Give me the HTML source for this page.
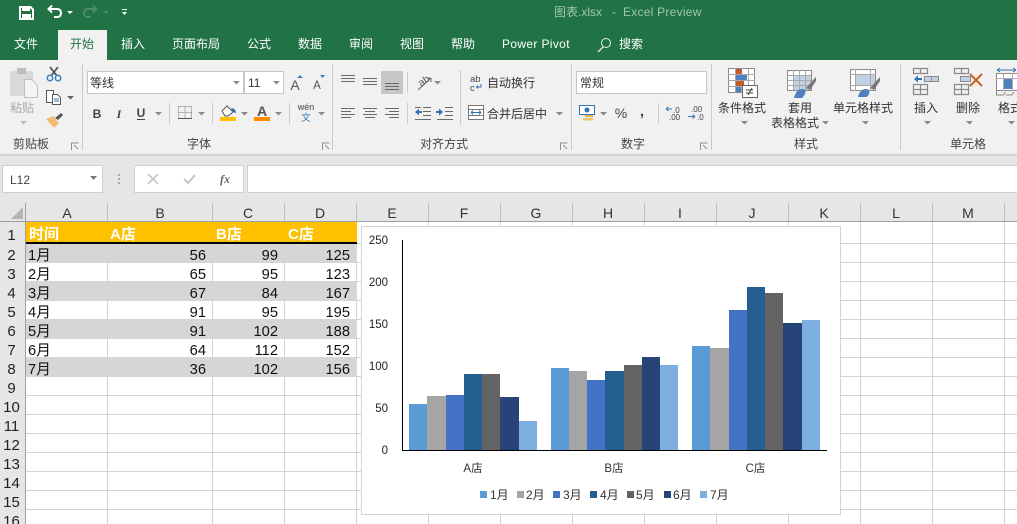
<!DOCTYPE html>
<html><head><meta charset="utf-8"><style>
html,body{margin:0;padding:0;background:#fff;width:1017px;height:524px;overflow:hidden}
svg{display:block}
text{font-family:"Liberation Sans","Noto Sans CJK SC",sans-serif;font-size:12px;fill:#333}
.t{fill:#fff}
.c{text-anchor:middle}
.r{text-anchor:end}
.g{fill:#444}
.d{fill:#8a8a8a;stroke:none}
.cell{font-size:14.7px;fill:#111}
.rh{font-size:15px;fill:#222;text-anchor:middle}
.ch{font-size:14px;fill:#333;text-anchor:middle}
.y{font-size:11.5px;fill:#222;text-anchor:end}
.lg{font-size:12px;fill:#333}
.h{font-size:15px;font-weight:bold;fill:#fff}
.ln{stroke:#6a6a6a;stroke-width:1;fill:none}
</style></head><body>
<svg width="1017" height="524" viewBox="0 0 1017 524" xmlns="http://www.w3.org/2000/svg">
<rect width="1017" height="524" fill="#fff"/>
<!-- title bar -->
<rect width="1017" height="60" fill="#217346"/>
<path d="M20 7h10.500l2.500 2.500V19H20z" fill="none" stroke="#fff" stroke-width="2"/>
<rect x="22" y="7" width="8" height="4" fill="#fff"/><rect x="22" y="14" width="9" height="5" fill="#fff"/>
<path d="M49 9h8c3 0 4 2 4 4s-1 4-4 4h-3M52 5.500l-3.500 3.500 3.500 3.500" fill="none" stroke="#fff" stroke-width="2"/>
<path d="M67 11h6l-3 3z" fill="#fff"/>
<path d="M96 9h-8c-3 0-4 2-4 4s1 4 4 4h3M93 5.500l3.500 3.500-3.500 3.500" fill="none" stroke="#4d8d69" stroke-width="2"/>
<path d="M103 11h6l-3 3z" fill="#4d8d69"/>
<rect x="122" y="9" width="5" height="1" fill="#fff"/><path d="M122 12h5l-2.500 3z" fill="#fff"/>
<text x="554" y="16" style="fill:#a3c5b1;font-size:12px">图表.xlsx</text>
<text x="612" y="16" style="fill:#a3c5b1;font-size:12px">-</text>
<text x="623" y="16" style="fill:#a3c5b1;font-size:12px;letter-spacing:.25px">Excel Preview</text>
<rect x="58" y="30" width="49" height="30" fill="#f1f1f1"/>
<text x="14" y="48" class="t">文件</text>
<text x="70" y="48" style="fill:#217346">开始</text>
<text x="121" y="48" class="t">插入</text>
<text x="172" y="48" class="t">页面布局</text>
<text x="247" y="48" class="t">公式</text>
<text x="298" y="48" class="t">数据</text>
<text x="349" y="48" class="t">审阅</text>
<text x="400" y="48" class="t">视图</text>
<text x="451" y="48" class="t">帮助</text>
<text x="502" y="48" class="t" style="letter-spacing:.35px">Power Pivot</text>
<circle cx="606" cy="43" r="4.500" fill="none" stroke="#e6efe9" stroke-width="1"/><path d="M603 47l-5 5" stroke="#e6efe9" stroke-width="1.300"/>
<text x="619" y="48" class="t">搜索</text>
<!-- ribbon -->
<rect y="60" width="1017" height="94" fill="#f1f1f1"/>
<rect y="154" width="1017" height="2" fill="#d2d2d2"/>
<rect y="156" width="1017" height="65" fill="#e6e6e6"/>
<g fill="#c9c9c9"><rect x="82" y="64" width="1" height="86"/><rect x="332" y="64" width="1" height="86"/><rect x="571" y="64" width="1" height="86"/><rect x="711" y="64" width="1" height="86"/><rect x="900" y="64" width="1" height="86"/></g>
<!-- clipboard -->
<rect x="10" y="71" width="23" height="25" fill="#d9d9d9"/><rect x="17" y="68" width="9" height="6" fill="#bdbdbd"/>
<path d="M24.500 79.500h7l6 6v12h-13z" fill="#f4f4f4" stroke="#c0c0c0"/>
<text x="10" y="112" style="fill:#a9a9a9">粘贴</text>
<path d="M20 121h7l-3.500 3.500z" fill="#b5b5b5"/>
<path d="M50 67l7 9M58 67l-7 9" stroke="#555" stroke-width="1.800" fill="none"/>
<circle cx="50" cy="78" r="2.700" fill="none" stroke="#3f7fbf" stroke-width="1.500"/><circle cx="58" cy="78" r="2.700" fill="none" stroke="#3f7fbf" stroke-width="1.500"/>
<path d="M46.500 90.500h7v12h-7z" fill="#fff" stroke="#555"/><path d="M52.500 94.500h5l3 3v7h-8z" fill="#fff" stroke="#555"/>
<path d="M54 99h5M54 101h5" stroke="#2f75b5"/>
<path d="M67 96h7l-3.500 3.500z" fill="#666"/>
<path d="M46 119l7-3 6 7-5 5z" fill="#f0bd77"/><path d="M55 118l6-5 2 2-5 5z" fill="#555"/>
<text x="13" y="148" class="g">剪贴板</text>
<!-- launchers -->
<g fill="none" stroke="#8f8f8f"><path d="M71.500 150v-7h7M322.500 150v-7h7M560.500 150v-7h7M700.500 150v-7h7"/><path d="M74 145l4 4M325 145l4 4M563 145l4 4M703 145l4 4"/></g>
<!-- font -->
<rect x="87.500" y="71.500" width="156" height="22" fill="#fff" stroke="#c6c6c6"/><rect x="244.500" y="71.500" width="39" height="22" fill="#fff" stroke="#c6c6c6"/>
<text x="90" y="87">等线</text><text x="248" y="87">11</text>
<path class="d" d="M233 81h7l-3.500 3.500zM273 81h7l-3.500 3.500z"/>
<text x="295" y="90" class="c" style="font-size:14px;fill:#555">A</text><text x="317" y="89" class="c" style="font-size:11.500px;fill:#555">A</text>
<path d="M297 78l3-3 3 3z" fill="#3f7fbf"/><path d="M320 75h5l-2.500 3z" fill="#3f7fbf"/>
<text x="97" y="118" class="c" style="font-weight:bold;fill:#444">B</text>
<text x="119" y="118" class="c" style="font-style:italic;font-weight:bold;fill:#444;font-family:'Liberation Serif',serif">I</text>
<text x="141" y="117" class="c" style="font-weight:bold;fill:#444">U</text><rect x="137" y="119" width="8" height="1" fill="#444"/>
<path class="d" d="M155 112h7l-3.500 3.500zM198 112h7l-3.500 3.500zM241 112h7l-3.500 3.500zM275 112h7l-3.500 3.500zM318 112h7l-3.500 3.500zM600 112h7l-3.500 3.500zM556 112h7l-3.500 3.500zM741 121h7l-3.500 3.500zM822 121h7l-3.500 3.500zM862 121h7l-3.500 3.500zM924 121h7l-3.500 3.500zM966 121h7l-3.500 3.500zM1008 121h7l-3.500 3.500zM434 81h7l-3.500 3.500zM696 81h7l-3.500 3.500z"/>
<g fill="#c9c9c9"><rect x="169" y="103" width="1" height="21"/><rect x="212" y="103" width="1" height="21"/><rect x="289" y="103" width="1" height="21"/><rect x="407" y="72" width="1" height="21"/><rect x="407" y="103" width="1" height="21"/><rect x="460" y="70" width="1" height="55"/><rect x="658" y="103" width="1" height="21"/></g>
<path d="M178.500 106.500h13v12h-13z M185 106.500v12M178.500 112.500h13" fill="none" stroke="#777" stroke-dasharray="1 1"/><rect x="178" y="118" width="14" height="1" fill="#555"/>
<path d="M222 111l5-5 6 6-5 4h-3z" fill="#fff" stroke="#555"/><path d="M231 108c3 0 5 2 5 5l-3-1z" fill="#2f75b5"/><rect x="220" y="117" width="16" height="4" fill="#ffc000"/>
<text x="262" y="116" class="c" style="font-size:14px;font-weight:bold;fill:#555">A</text><rect x="254" y="117" width="16" height="4" fill="#ff8c00"/>
<text x="306" y="110" class="c" style="font-size:9px;fill:#444">wén</text><text x="306" y="121" class="c" style="font-size:9.500px;fill:#2f75b5">文</text>
<text x="187" y="148" class="g">字体</text>
<!-- alignment -->
<rect x="381" y="71" width="22" height="23" fill="#c6c6c6"/>
<path class="ln" d="M341 75.500h14M341 78.500h14M341 81.500h14M363 78.500h14M363 81.500h14M363 84.500h14M385 83.500h14M385 86.500h14M385 89.500h14"/>
<path class="ln" d="M341 108.500h14M341 111.500h10M341 114.500h14M341 117.500h10M363 108.500h14M365 111.500h10M363 114.500h14M365 117.500h10M385 108.500h14M389 111.500h10M385 114.500h14M389 117.500h10"/>
<text x="424" y="84" class="c" style="font-size:10px;fill:#555" transform="rotate(-35 424 81)">ab</text><path d="M418 90l13-12M431 78l-4 0M431 78l0 4" stroke="#666" fill="none"/>
<path class="ln" d="M423 107.500h8M423 111.500h8M423 115.500h8M415 119.500h16M415 107.500h6M445 107.500h8M445 111.500h8M445 115.500h8M437 119.500h16"/>
<path d="M415 112l4-3.500v2.500h3v2h-3v2.500z" fill="#2f75b5"/><path d="M443 112l-4-3.500v2.500h-3v2h3v2.500z" fill="#2f75b5"/>
<text x="470" y="82" style="font-size:9.500px;fill:#444">ab</text><text x="470" y="91" style="font-size:9.500px;fill:#444">c</text><path d="M481 84v3h-4M478 85.500l-1.500 1.500 1.500 1.500" stroke="#2f75b5" fill="none"/>
<text x="487" y="87">自动换行</text>
<rect x="468.500" y="105.500" width="15" height="14" fill="#fff" stroke="#777"/><path d="M468 109.500h16M468 115.500h16" stroke="#777"/><path d="M471 112.500h10M471 112.500l2-2M471 112.500l2 2M481 112.500l-2-2M481 112.500l-2 2" stroke="#2f75b5" fill="none"/>
<text x="487" y="118">合并后居中</text>
<text x="420" y="148" class="g">对齐方式</text>
<!-- number -->
<rect x="576.500" y="71.500" width="130" height="22" fill="#fff" stroke="#c6c6c6"/>
<text x="580" y="87">常规</text>
<rect x="579.500" y="105.500" width="15" height="9" fill="#fff" stroke="#2f75b5"/><circle cx="587" cy="110" r="2.500" fill="#2f75b5"/>
<rect x="585" y="115" width="8" height="2" fill="#e8b04a"/><rect x="583" y="118" width="10" height="2.500" fill="#f0c27a"/>
<text x="621" y="118" class="c" style="font-size:14px;fill:#444">%</text>
<text x="642" y="116" class="c" style="font-size:15px;font-weight:bold;fill:#444">,</text>
<text x="673" y="113" style="font-size:8px;fill:#444">.0</text><text x="669" y="120" style="font-size:8px;fill:#444">.00</text><path d="M666 109h6M666 109l2.500-2M666 109l2.500 2" stroke="#2f75b5" fill="none"/>
<text x="691" y="112" style="font-size:8px;fill:#444">.00</text><text x="697" y="120" style="font-size:8px;fill:#444">.0</text><path d="M688 116.500h7M695 116.500l-2.500-2M695 116.500l-2.500 2" stroke="#2f75b5" fill="none"/>
<text x="621" y="148" class="g">数字</text>
<!-- conditional -->
<rect x="728.500" y="68.500" width="26" height="24" fill="#fff" stroke="#8a8a8a"/>
<path d="M728 74.500h27M728 80.500h27M728 86.500h27M735.500 68v25M741.500 68v25M748.500 68v25" stroke="#a8a8a8"/>
<rect x="736" y="69" width="6" height="5" fill="#c55a28"/><rect x="736" y="75" width="11" height="5" fill="#4f81bd"/><rect x="736" y="81" width="8" height="5" fill="#c55a28"/><rect x="736" y="87" width="5" height="5" fill="#4f81bd"/>
<rect x="742.500" y="85.500" width="15" height="12" fill="#fff" stroke="#666"/><path d="M746 90h7M746 93h7M752 88l-4 7" stroke="#444" fill="none"/>
<text x="718" y="112">条件格式</text>
<!-- table style -->
<rect x="787.500" y="70.500" width="24" height="20" fill="#fff" stroke="#8a8a8a"/><rect x="793" y="75" width="18" height="15" fill="#bfd1e2"/>
<path d="M787 75.500h24M787 80.500h24M787 85.500h24M793.500 70v20M799.500 70v20M805.500 70v20" stroke="#a8a8a8"/>
<path d="M806 88l8-9 2-2v4l-6 9z" fill="#777"/><path d="M794 98c1-5 4-9 8-9 3 0 4 2 3 5-1 2-2 3-3 4z" fill="#4f81bd"/>
<text x="788" y="112">套用</text><text x="771" y="127">表格格式</text>
<!-- cell style -->
<rect x="850.500" y="69.500" width="25" height="21" fill="#fff" stroke="#8a8a8a"/><rect x="855" y="74" width="20" height="11" fill="#bfd1e2"/>
<path d="M850 74.500h26M850 85.500h26M855.500 69v22M870.500 69v22" stroke="#a8a8a8"/>
<path d="M870 88l8-9 2-2v4l-6 9z" fill="#777"/><path d="M858 97c1-5 4-8 8-8 3 0 4 2 3 5-1 2-2 3-3 3z" fill="#4f81bd"/>
<text x="833" y="112">单元格样式</text>
<text x="794" y="148" class="g">样式</text>
<!-- insert/delete/format -->
<g fill="none" stroke="#8a8a8a" stroke-width="1.200">
<path d="M913.500 68.500h14v5h-14zM920.500 68.500v5M913.500 84.500h14v10h-14zM913.500 89.500h14M920.500 84.500v10"/>
<path d="M954.500 68.500h14v5h-14zM961.500 68.500v5M954.500 84.500h14v10h-14zM954.500 89.500h14M961.500 84.500v10"/>
</g>
<rect x="924.500" y="76.500" width="14" height="5" fill="#bfd1e2" stroke="#8a8a8a"/><path d="M931.500 76v6" stroke="#8a8a8a"/>
<path d="M914 79l4-3.500v2.500h4v2h-4v2.500z" fill="#2f75b5"/>
<rect x="960.500" y="76.500" width="10" height="5" fill="#bfd1e2" stroke="#8a8a8a"/>
<path d="M970 74l12 12M982 74l-12 12" stroke="#c8692a" stroke-width="2.200"/>
<path d="M997 70h19M997 70l3-2M997 70l3 2M1016 70l-3-2M1016 70l-3 2" stroke="#2f75b5" fill="none"/>
<rect x="996.500" y="73.500" width="22" height="17" fill="#fff" stroke="#8a8a8a"/><rect x="1004" y="79" width="8" height="10" fill="#4f81bd"/>
<path d="M996 78.500h22M1003.500 73v18M1012.500 73v18" stroke="#b0b0b0"/>
<path d="M996.500 91v4h7l2-3M1006 95h6l2-3" stroke="#8a8a8a" fill="none"/>
<text x="914" y="112">插入</text><text x="956" y="112">删除</text><text x="998" y="112">格式</text>
<text x="950" y="148" class="g">单元格</text>
<!-- formula bar -->
<rect x="2.500" y="165.500" width="100" height="27" fill="#fff" stroke="#cfcfcf"/>
<text x="10" y="184" style="font-size:12px;fill:#444">L12</text>
<path d="M90 176h7l-3.500 4z" fill="#777"/>
<g fill="#a8a8a8"><rect x="118" y="174" width="2" height="2"/><rect x="118" y="178" width="2" height="2"/><rect x="118" y="182" width="2" height="2"/></g>
<rect x="134.500" y="165.500" width="109" height="27" fill="#fff" stroke="#cfcfcf"/>
<rect x="247.500" y="165.500" width="770" height="27" fill="#fff" stroke="#cfcfcf"/>
<path d="M148 174l10 10M158 174l-10 10" stroke="#c8c8c8" stroke-width="1.800"/>
<path d="M184 179l4 4 7-8" stroke="#c8c8c8" stroke-width="2.200" fill="none"/>
<text x="225" y="183" class="c" style="font-family:'Liberation Serif',serif;font-style:italic;font-weight:bold;font-size:12px;fill:#666">fx</text>
<!-- headers -->
<rect y="203" width="1017" height="18" fill="#e6e6e6"/>
<rect y="221" width="25" height="303" fill="#e6e6e6"/>
<path d="M23 207v12H11z" fill="#b4b4b4"/>
<rect y="221" width="1017" height="1" fill="#9f9f9f"/><rect x="25" y="203" width="1" height="321" fill="#9f9f9f"/>
<g fill="#c0c0c0"><rect x="107" y="203" width="1" height="18"/><rect x="212" y="203" width="1" height="18"/><rect x="284" y="203" width="1" height="18"/><rect x="356" y="203" width="1" height="18"/><rect x="428" y="203" width="1" height="18"/><rect x="500" y="203" width="1" height="18"/><rect x="572" y="203" width="1" height="18"/><rect x="644" y="203" width="1" height="18"/><rect x="716" y="203" width="1" height="18"/><rect x="788" y="203" width="1" height="18"/><rect x="860" y="203" width="1" height="18"/><rect x="932" y="203" width="1" height="18"/><rect x="1004" y="203" width="1" height="18"/></g>
<text x="67" y="218" class="ch">A</text><text x="160" y="218" class="ch">B</text><text x="248" y="218" class="ch">C</text><text x="320" y="218" class="ch">D</text><text x="392" y="218" class="ch">E</text><text x="464" y="218" class="ch">F</text><text x="536" y="218" class="ch">G</text><text x="608" y="218" class="ch">H</text><text x="680" y="218" class="ch">I</text><text x="752" y="218" class="ch">J</text><text x="824" y="218" class="ch">K</text><text x="896" y="218" class="ch">L</text><text x="968" y="218" class="ch">M</text>
<!-- grid -->
<g fill="#d4d4d4">
<rect x="26" y="243" width="991" height="1"/><rect x="26" y="262" width="991" height="1"/><rect x="26" y="281" width="991" height="1"/><rect x="26" y="300" width="991" height="1"/><rect x="26" y="319" width="991" height="1"/><rect x="26" y="338" width="991" height="1"/><rect x="26" y="357" width="991" height="1"/><rect x="26" y="376" width="991" height="1"/><rect x="26" y="395" width="991" height="1"/><rect x="26" y="414" width="991" height="1"/><rect x="26" y="433" width="991" height="1"/><rect x="26" y="452" width="991" height="1"/><rect x="26" y="471" width="991" height="1"/><rect x="26" y="490" width="991" height="1"/><rect x="26" y="509" width="991" height="1"/>
<rect x="107" y="222" width="1" height="302"/><rect x="212" y="222" width="1" height="302"/><rect x="284" y="222" width="1" height="302"/><rect x="356" y="222" width="1" height="302"/><rect x="428" y="222" width="1" height="302"/><rect x="500" y="222" width="1" height="302"/><rect x="572" y="222" width="1" height="302"/><rect x="644" y="222" width="1" height="302"/><rect x="716" y="222" width="1" height="302"/><rect x="788" y="222" width="1" height="302"/><rect x="860" y="222" width="1" height="302"/><rect x="932" y="222" width="1" height="302"/><rect x="1004" y="222" width="1" height="302"/>
</g>
<!-- table fills -->
<rect x="26" y="222" width="331" height="20" fill="#ffc000"/>
<rect x="26" y="242" width="331" height="2" fill="#000"/>
<g fill="#d6d6d6"><rect x="26" y="244" width="331" height="19"/><rect x="26" y="281" width="331" height="20"/><rect x="26" y="319" width="331" height="20"/><rect x="26" y="357" width="331" height="20"/></g>
<rect x="26" y="263" width="81" height="1" fill="#fff" opacity="0"/>
<!-- row headers -->
<text x="11.500" y="240" class="rh">1</text><text x="11.500" y="260" class="rh">2</text><text x="11.500" y="279" class="rh">3</text><text x="11.500" y="298" class="rh">4</text><text x="11.500" y="317" class="rh">5</text><text x="11.500" y="336" class="rh">6</text><text x="11.500" y="355" class="rh">7</text><text x="11.500" y="374" class="rh">8</text><text x="11.500" y="393" class="rh">9</text><text x="11.500" y="412" class="rh">10</text><text x="11.500" y="431" class="rh">11</text><text x="11.500" y="450" class="rh">12</text><text x="11.500" y="469" class="rh">13</text><text x="11.500" y="488" class="rh">14</text><text x="11.500" y="507" class="rh">15</text><text x="11.500" y="526" class="rh">16</text>
<!-- header cells -->
<text x="29" y="239" class="h">时间</text><text x="110" y="239" class="h">A店</text><text x="216" y="239" class="h">B店</text><text x="288" y="239" class="h">C店</text>
<!-- data -->
<text x="28" y="260" class="cell">1月</text><text x="206" y="260" class="cell r">56</text><text x="278" y="260" class="cell r">99</text><text x="350" y="260" class="cell r">125</text>
<text x="28" y="279" class="cell">2月</text><text x="206" y="279" class="cell r">65</text><text x="278" y="279" class="cell r">95</text><text x="350" y="279" class="cell r">123</text>
<text x="28" y="298" class="cell">3月</text><text x="206" y="298" class="cell r">67</text><text x="278" y="298" class="cell r">84</text><text x="350" y="298" class="cell r">167</text>
<text x="28" y="317" class="cell">4月</text><text x="206" y="317" class="cell r">91</text><text x="278" y="317" class="cell r">95</text><text x="350" y="317" class="cell r">195</text>
<text x="28" y="336" class="cell">5月</text><text x="206" y="336" class="cell r">91</text><text x="278" y="336" class="cell r">102</text><text x="350" y="336" class="cell r">188</text>
<text x="28" y="355" class="cell">6月</text><text x="206" y="355" class="cell r">64</text><text x="278" y="355" class="cell r">112</text><text x="350" y="355" class="cell r">152</text>
<text x="28" y="374" class="cell">7月</text><text x="206" y="374" class="cell r">36</text><text x="278" y="374" class="cell r">102</text><text x="350" y="374" class="cell r">156</text>
<!-- chart -->
<rect x="361.500" y="226.500" width="479" height="288" fill="#fff" stroke="#d4d4d4"/>
<text x="388" y="244" class="y">250</text><text x="388" y="286" class="y">200</text><text x="388" y="328" class="y">150</text><text x="388" y="370" class="y">100</text><text x="388" y="412" class="y">50</text><text x="388" y="454" class="y">0</text>
<g fill="#5b9bd5"><rect x="409" y="404" width="18" height="46"/><rect x="551" y="368" width="18" height="82"/><rect x="692" y="346" width="18" height="104"/></g>
<g fill="#a5a5a5"><rect x="427" y="396" width="19" height="54"/><rect x="569" y="371" width="18" height="79"/><rect x="710" y="348" width="19" height="102"/></g>
<g fill="#4472c4"><rect x="446" y="395" width="18" height="55"/><rect x="587" y="380" width="18" height="70"/><rect x="729" y="310" width="18" height="140"/></g>
<g fill="#255e91"><rect x="464" y="374" width="18" height="76"/><rect x="605" y="371" width="19" height="79"/><rect x="747" y="287" width="18" height="163"/></g>
<g fill="#636363"><rect x="482" y="374" width="18" height="76"/><rect x="624" y="365" width="18" height="85"/><rect x="765" y="293" width="18" height="157"/></g>
<g fill="#264478"><rect x="500" y="397" width="19" height="53"/><rect x="642" y="357" width="18" height="93"/><rect x="783" y="323" width="19" height="127"/></g>
<g fill="#7cafdd"><rect x="519" y="421" width="18" height="29"/><rect x="660" y="365" width="18" height="85"/><rect x="802" y="320" width="18" height="130"/></g>
<rect x="402" y="240" width="1" height="211" fill="#000"/><rect x="402" y="450" width="425" height="1" fill="#000"/>
<text x="473" y="472" class="c" style="font-size:11.500px">A店</text><text x="614" y="472" class="c" style="font-size:11.500px">B店</text><text x="755.500" y="472" class="c" style="font-size:11.500px">C店</text>
<rect x="480" y="491" width="7" height="7" fill="#5b9bd5"/><text x="490" y="499" class="lg">1月</text>
<rect x="517" y="491" width="7" height="7" fill="#a5a5a5"/><text x="526" y="499" class="lg">2月</text>
<rect x="553" y="491" width="7" height="7" fill="#4472c4"/><text x="563" y="499" class="lg">3月</text>
<rect x="590" y="491" width="7" height="7" fill="#255e91"/><text x="600" y="499" class="lg">4月</text>
<rect x="627" y="491" width="7" height="7" fill="#636363"/><text x="636" y="499" class="lg">5月</text>
<rect x="664" y="491" width="7" height="7" fill="#264478"/><text x="673" y="499" class="lg">6月</text>
<rect x="700" y="491" width="7" height="7" fill="#7cafdd"/><text x="710" y="499" class="lg">7月</text>
</svg>
</body></html>
